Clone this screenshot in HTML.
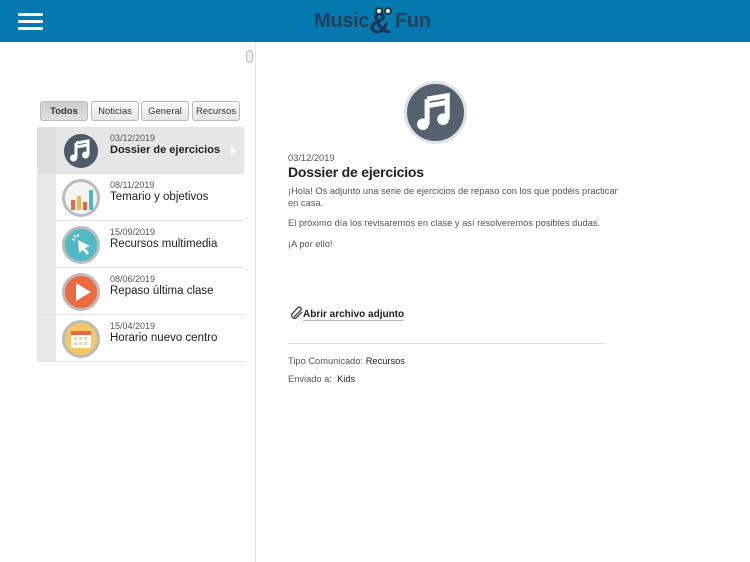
<!DOCTYPE html>
<html><head><meta charset="utf-8"><style>
*{margin:0;padding:0;box-sizing:border-box}
body{width:750px;height:562px;overflow:hidden;background:#fff;font-family:"Liberation Sans",sans-serif;position:relative;color:#222}
.hdr{position:absolute;left:0;top:0;width:750px;height:42px;background:#0379b0}
.bar{position:absolute;left:18px;width:25px;height:3px;border-radius:2px;background:#fff}
.logo{position:absolute;top:10px;font-weight:bold;font-size:20px;color:#24415c;letter-spacing:-0.3px}
.side{position:absolute;left:255px;top:42px;width:1px;height:520px;background:#e6e6e6}
.scroll{position:absolute;left:246px;top:50px;width:7px;height:13px;border:1px solid #bbb;border-radius:4px;background:#eee}
.tab{position:absolute;top:101px;height:20px;border:1px solid #bbb;border-radius:3px;background:linear-gradient(#fafafa,#e6e6e6);font-size:9.5px;color:#333;text-align:center;line-height:19px}
.row{position:absolute;left:37px;width:207px;height:47px;border-bottom:1px solid #e4e4e4;background:#fff}
.row .strip{position:absolute;left:0;top:0;width:19px;height:100%;background:#e8e8ea}
.row .ic{position:absolute;left:25px;top:5px;width:38px;height:38px;border-radius:50%;border:3px solid #bbb}
.row .d{position:absolute;left:73px;top:6px;font-size:9px;color:#555}
.row .t{position:absolute;left:73px;top:17px;font-size:11.5px;color:#222}
.p{position:absolute;left:288px;font-size:9.3px;color:#555}
</style></head><body>
<div class="hdr">
<div class="bar" style="top:13px"></div><div class="bar" style="top:20px"></div><div class="bar" style="top:27px"></div>
<div class="logo" style="left:314px">Music</div>
<div class="logo" style="left:369px;top:7px;font-size:30px;color:#1b3550">&amp;</div>
<div class="logo" style="left:395px">Fun</div>
<div style="position:absolute;left:375px;top:7px;width:8px;height:8px;border-radius:50%;background:#fff;border:2px solid #1b3550"></div>
<div style="position:absolute;left:384px;top:7px;width:8px;height:8px;border-radius:50%;background:#fff;border:2px solid #1b3550"></div>
</div>
<div class="side"></div><div class="scroll"></div>
<div class="tab" style="left:40px;width:48px;background:linear-gradient(#ccc,#e0e0e0);font-weight:bold">Todos</div>
<div class="tab" style="left:91px;width:48px">Noticias</div>
<div class="tab" style="left:141px;width:48px">General</div>
<div class="tab" style="left:192px;width:48px">Recursos</div>

<div class="row" style="top:127px;background:#e6e6e6;border-radius:3px 0 0 0"><div class="strip" style="background:#dedede"></div>
<div class="ic" style="background:#4d5c6b;border-color:#4d5c6b;left:27px;width:34px;height:34px;top:7px"><svg width="34" height="34" viewBox="0 0 34 34" style="position:absolute;left:-3px;top:-3px"><path d="M12 9 L24 7 V21" stroke="#fff" stroke-width="3" fill="none"/><path d="M12 9V24" stroke="#fff" stroke-width="3"/><path d="M12 13 L24 11" stroke="#fff" stroke-width="3"/><circle cx="9.5" cy="24" r="3.5" fill="#fff"/><circle cx="21.5" cy="21" r="3.5" fill="#fff"/></svg></div>
<div class="d">03/12/2019</div><div class="t" style="font-weight:bold;font-size:11px">Dossier de ejercicios</div>
<div style="position:absolute;left:194px;top:19px;border-left:5px solid #fff;border-top:5px solid transparent;border-bottom:5px solid transparent"></div></div>

<div class="row" style="top:174px"><div class="strip"></div><div class="ic" style="background:#f4f4f4"><svg width="32" height="32" style="position:absolute;left:0;top:0"><rect x="6" y="18" width="4" height="10" fill="#e8684a"/><rect x="12" y="14" width="4" height="14" fill="#f0b44a"/><rect x="18" y="20" width="4" height="8" fill="#e8684a"/><rect x="24" y="8" width="4" height="20" fill="#4ab8c0"/></svg></div><div class="d">08/11/2019</div><div class="t">Temario y objetivos</div></div>

<div class="row" style="top:221px"><div class="strip"></div><div class="ic" style="background:#4fbac4"><svg width="32" height="32" style="position:absolute;left:0;top:0"><path d="M13 11 L25 17 L20 19 L24 24 L22 26 L18 21 L14 24Z" fill="#fff"/><path d="M7 10l3 1M9 6l2 3M13 5v3" stroke="#fff" stroke-width="1.5"/></svg></div><div class="d">15/09/2019</div><div class="t">Recursos multimedia</div></div>

<div class="row" style="top:268px"><div class="strip"></div><div class="ic" style="background:#ec6a3d"><svg width="32" height="32" style="position:absolute;left:0;top:0"><path d="M11 7 L26 16 L11 25Z" fill="#fff"/></svg></div><div class="d">08/06/2019</div><div class="t">Repaso última clase</div></div>

<div class="row" style="top:315px;border-radius:0 0 0 3px"><div class="strip"></div><div class="ic" style="background:#f5c864"><svg width="32" height="32" style="position:absolute;left:0;top:0"><rect x="6" y="8" width="20" height="17" fill="#fff"/><rect x="6" y="8" width="20" height="4" fill="#e8684a"/><g fill="#e8d4b0"><rect x="9" y="14" width="3" height="3"/><rect x="14" y="14" width="3" height="3"/><rect x="19" y="14" width="3" height="3"/><rect x="9" y="19" width="3" height="3"/><rect x="14" y="19" width="3" height="3"/><rect x="19" y="19" width="3" height="3"/></g></svg></div><div class="d">15/04/2019</div><div class="t">Horario nuevo centro</div></div>

<div style="position:absolute;left:404px;top:81px;width:63px;height:63px;border-radius:50%;background:#55616f;border:3px solid #dde2e6"><svg width="57" height="57" viewBox="0 0 34 34"><path d="M12 9 L24 7 V21" stroke="#fff" stroke-width="3" fill="none"/><path d="M12 9V24" stroke="#fff" stroke-width="3"/><path d="M12 13 L24 11" stroke="#fff" stroke-width="3"/><circle cx="9.5" cy="24" r="3.5" fill="#fff"/><circle cx="21.5" cy="21" r="3.5" fill="#fff"/></svg></div>
<div class="p" style="top:153px">03/12/2019</div>
<div class="p" style="top:164px;font-size:14px;color:#222;font-weight:bold;letter-spacing:-0.2px">Dossier de ejercicios</div>
<div class="p" style="top:185px;line-height:12px;width:340px">¡Hola! Os adjunto una serie de ejercicios de repaso con los que podéis practicar en casa.</div>
<div class="p" style="top:218px">El próximo día los revisaremos en clase y así resolveremos posibles dudas.</div>
<div class="p" style="top:239px">¡A por ello!</div>
<div class="p" style="top:309px;font-size:10px;color:#222;font-weight:bold;border-bottom:1px solid #bbb;left:303px">Abrir archivo adjunto</div>
<svg style="position:absolute;left:290px;top:306px" width="14" height="14" viewBox="0 0 14 14"><path d="M4 11 L11 4 A2 2 0 0 0 8 1.5 L2 8 A3 3 0 0 0 6 12 L12 6" stroke="#444" stroke-width="1.3" fill="none"/></svg>
<div style="position:absolute;left:288px;top:343px;width:317px;height:1px;background:#ddd"></div>
<div class="p" style="top:356px">Tipo Comunicado: <span style="color:#222">Recursos</span></div>
<div class="p" style="top:374px">Enviado a:&nbsp; <span style="color:#222">Kids</span></div>
</body></html>
